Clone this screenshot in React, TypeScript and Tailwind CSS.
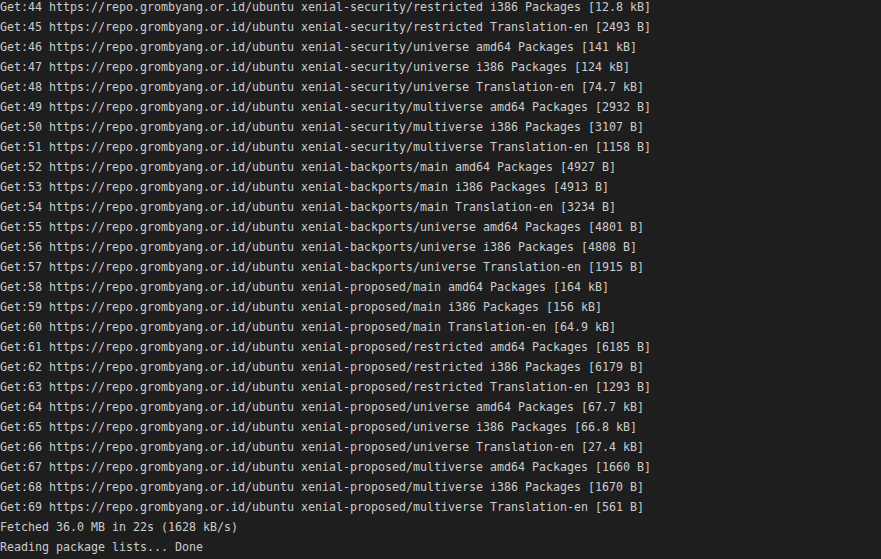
import React from 'react';

const base = 'https://repo.grombyang.or.id/ubuntu';

// [suite/component, target, size]
const entries: [string, string, string][] = [
  ['xenial-security/restricted', 'i386 Packages', '12.8 kB'],
  ['xenial-security/restricted', 'Translation-en', '2493 B'],
  ['xenial-security/universe', 'amd64 Packages', '141 kB'],
  ['xenial-security/universe', 'i386 Packages', '124 kB'],
  ['xenial-security/universe', 'Translation-en', '74.7 kB'],
  ['xenial-security/multiverse', 'amd64 Packages', '2932 B'],
  ['xenial-security/multiverse', 'i386 Packages', '3107 B'],
  ['xenial-security/multiverse', 'Translation-en', '1158 B'],
  ['xenial-backports/main', 'amd64 Packages', '4927 B'],
  ['xenial-backports/main', 'i386 Packages', '4913 B'],
  ['xenial-backports/main', 'Translation-en', '3234 B'],
  ['xenial-backports/universe', 'amd64 Packages', '4801 B'],
  ['xenial-backports/universe', 'i386 Packages', '4808 B'],
  ['xenial-backports/universe', 'Translation-en', '1915 B'],
  ['xenial-proposed/main', 'amd64 Packages', '164 kB'],
  ['xenial-proposed/main', 'i386 Packages', '156 kB'],
  ['xenial-proposed/main', 'Translation-en', '64.9 kB'],
  ['xenial-proposed/restricted', 'amd64 Packages', '6185 B'],
  ['xenial-proposed/restricted', 'i386 Packages', '6179 B'],
  ['xenial-proposed/restricted', 'Translation-en', '1293 B'],
  ['xenial-proposed/universe', 'amd64 Packages', '67.7 kB'],
  ['xenial-proposed/universe', 'i386 Packages', '66.8 kB'],
  ['xenial-proposed/universe', 'Translation-en', '27.4 kB'],
  ['xenial-proposed/multiverse', 'amd64 Packages', '1660 B'],
  ['xenial-proposed/multiverse', 'i386 Packages', '1670 B'],
  ['xenial-proposed/multiverse', 'Translation-en', '561 B'],
];

export default function App() {
  const lines = [
    ...entries.map(([suite, target, size], i) => `Get:${44 + i} ${base} ${suite} ${target} [${size}]`),
    'Fetched 36.0 MB in 22s (1628 kB/s)',
    'Reading package lists... Done',
  ];

  return (
    <div className="w-[881px] h-[559px] overflow-hidden bg-[#1e1e1e] flex flex-col justify-end pb-[2px]">
      {lines.map((line, i) => (
        <div
          key={i}
          className="h-[20px] leading-[20px] whitespace-pre text-[11.63px] text-[#cccccc] font-['DejaVu_Sans_Mono',monospace]"
        >
          {line}
        </div>
      ))}
    </div>
  );
}
